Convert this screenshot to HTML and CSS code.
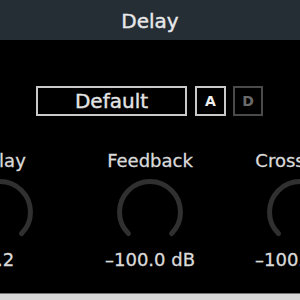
FILE: index.html
```html
<!DOCTYPE html>
<html lang="en">
<head>
    <meta charset="UTF-8">
    <meta name="viewport" content="width=device-width, initial-scale=1.0">
    <title>Delay</title>
    <link rel="stylesheet" href="styles.css">
</head>
<body>
    <div class="title-bar">Delay</div>

    <div class="preset-row">
        <div class="preset-name">Default</div>
        <div class="small-button">A</div>
        <div class="small-button disabled">D</div>
    </div>

    <div class="knob-row">
        <div class="knob">
            <div class="knob-label">Delay</div>
            <svg class="knob-dial" width="70" height="70" viewBox="0 0 70 70">
                <path d="M13.43 56.57 A30.5 30.5 0 1 1 56.57 56.57" />
            </svg>
            <div class="knob-value">0.2</div>
        </div>
        <div class="knob">
            <div class="knob-label">Feedback</div>
            <svg class="knob-dial" width="70" height="70" viewBox="0 0 70 70">
                <path d="M13.43 56.57 A30.5 30.5 0 1 1 56.57 56.57" />
            </svg>
            <div class="knob-value">&ndash;100.0 dB</div>
        </div>
        <div class="knob">
            <div class="knob-label">Crossfeed</div>
            <svg class="knob-dial" width="70" height="70" viewBox="0 0 70 70">
                <path d="M13.43 56.57 A30.5 30.5 0 1 1 56.57 56.57" />
            </svg>
            <div class="knob-value">&ndash;100.0 dB</div>
        </div>
    </div>

    <div class="bottom-bar"></div>
</body>
</html>
```

FILE: styles.css
```css
body {
    margin: 0;
    width: 300px;
    height: 300px;
    overflow: hidden;
    background-color: #000;
    font-family: "DejaVu Sans", sans-serif;
    color: #dcdcdc;
    display: flex;
    flex-direction: column;
}
.title-bar {
    height: 40px;
    line-height: 40px;
    padding-top: 1px;
    box-sizing: border-box;
    text-align: center;
    font-size: 20px;
    color: #e6e8ea;
    -webkit-text-stroke: 0.4px #e6e8ea;
    background-color: #262e35;
}
.preset-row {
    display: flex;
    gap: 8px;
    margin-top: 46px;
    margin-left: 36px;
}
.preset-name {
    width: 151px;
    height: 30px;
    box-sizing: border-box;
    border: 2px solid #c9c9c9;
    text-align: center;
    font-size: 20px;
    line-height: 26px;
    color: #e4e4e4;
    -webkit-text-stroke: 0.4px #e4e4e4;
}
.small-button {
    width: 31px;
    height: 30px;
    box-sizing: border-box;
    border: 2px solid #c9c9c9;
    text-align: center;
    font-size: 14px;
    font-weight: bold;
    line-height: 26px;
    color: #eee;
}
.small-button.disabled {
    width: 30px;
    margin-left: -1px;
    border-color: #4a4a4a;
    color: #6a6a6a;
}
.knob-row {
    display: flex;
    margin-top: 34px;
    margin-left: -75px;
}
.knob {
    width: 150px;
    flex-shrink: 0;
    display: flex;
    flex-direction: column;
    align-items: center;
}
.knob-label,
.knob-value {
    font-size: 18px;
    line-height: 22px;
    white-space: nowrap;
    color: #dadada;
    -webkit-text-stroke: 0.3px #dadada;
}
.knob-dial {
    display: block;
    margin-top: 5px;
}
.knob-dial path {
    fill: none;
    stroke: #303030;
    stroke-width: 5;
    stroke-linecap: round;
}
.knob-value {
    margin-top: 2px;
}
.bottom-bar {
    margin-top: auto;
    height: 6px;
    background-color: #d9d9d9;
    border-top: 1px solid #777;
}
```
